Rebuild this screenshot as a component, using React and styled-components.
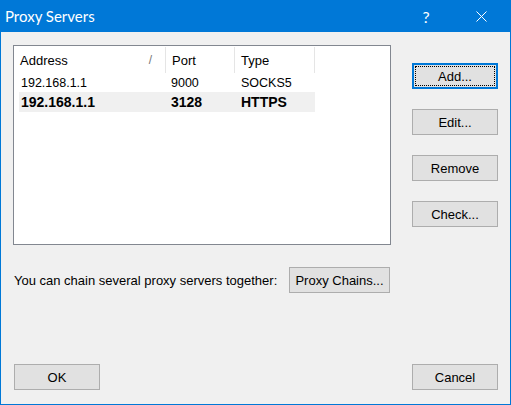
import React from 'react'
import styled, { createGlobalStyle } from 'styled-components'

const GlobalStyle = createGlobalStyle`
  html, body {
    margin: 0;
    padding: 0;
    background: #f0f0f0;
  }
`

const Window = styled.div`
  width: 511px;
  height: 405px;
  box-sizing: border-box;
  border: 1px solid #0078d7;
  border-top: none;
  background: #f0f0f0;
  display: flex;
  flex-direction: column;
  font-family: 'Liberation Sans', Arial, sans-serif;
  font-size: 13px;
  color: #000;
`

const TitleBar = styled.div`
  height: 32px;
  margin: 0 -1px;
  background: #0078d7;
  color: #fff;
  display: flex;
  align-items: center;
  font-family: Lato, 'Noto Sans', sans-serif;
  font-size: 15px;
  padding-left: 5px;
`

const Title = styled.div`
  flex: 1;
  margin-top: -1px;
`

const TitleButton = styled.div`
  width: 46px;
  height: 32px;
  display: flex;
  align-items: center;
  justify-content: center;
  font-size: 16px;
  margin-right: ${p => p.$mr || 0}px;
`

const Content = styled.div`
  flex: 1;
  display: flex;
  flex-direction: column;
  padding: 13px 12px 14px 12px;
`

const TopRow = styled.div`
  display: flex;
`

const ListBox = styled.div`
  width: 378px;
  height: 200px;
  box-sizing: border-box;
  border: 1px solid #828790;
  background: #fff;
  padding-left: 5px;
`

const Header = styled.div`
  display: flex;
  height: 28px;
  align-items: center;
`

const HeaderCell = styled.div`
  width: ${p => p.$w}px;
  box-sizing: border-box;
  height: 26px;
  padding-left: ${p => p.$pl || 6}px;
  display: flex;
  align-items: center;
  border-right: 1px solid #e5e5e5;
  position: relative;
`

const SortMark = styled.span`
  position: absolute;
  right: 13px;
  top: 6px;
  color: #777;
  font-size: 12px;
`

const Row = styled.div`
  display: flex;
  height: ${p => (p.$bold ? 20 : 18)}px;
  align-items: center;
  background: ${p => (p.$selected ? '#f0f0f0' : 'transparent')};
  width: 296px;
  font-weight: ${p => (p.$bold ? 700 : 400)};
  font-size: ${p => (p.$bold ? 14 : 12.5)}px;
`

const Cell = styled.div`
  width: ${p => p.$w}px;
  box-sizing: border-box;
  padding-left: ${p => p.$pl || 6}px;
  white-space: nowrap;
`

const SideButtons = styled.div`
  display: flex;
  flex-direction: column;
  gap: 20px;
  margin-left: 21px;
  padding-top: 18px;
`

const Button = styled.button`
  width: ${p => p.$w || 86}px;
  height: 26px;
  box-sizing: border-box;
  background: #e1e1e1;
  border: ${p => (p.$focus ? '2px solid #0078d7' : '1px solid #adadad')};
  font-family: 'Liberation Sans', Arial, sans-serif;
  font-size: 13px;
  color: #000;
  padding: 0;
  position: relative;
  &::after {
    content: '';
    display: ${p => (p.$focus ? 'block' : 'none')};
    position: absolute;
    inset: 1px;
    border: 1px dotted #000;
  }
`

const ChainRow = styled.div`
  display: flex;
  align-items: center;
  margin-top: 22px;
  padding-left: 1px;
`

const ChainLabel = styled.span`
  width: 275px;
`

const Spacer = styled.div`
  flex: 1;
`

const BottomRow = styled.div`
  display: flex;
  justify-content: space-between;
  padding-left: 1px;
`

const CloseIcon = () => (
  <svg width="11" height="11" viewBox="0 0 11 11">
    <path d="M0.5 0.5 L10.5 10.5 M10.5 0.5 L0.5 10.5" stroke="#fff" strokeWidth="1" />
  </svg>
)

const proxies = [
  { address: '192.168.1.1', port: '9000', type: 'SOCKS5' },
  { address: '192.168.1.1', port: '3128', type: 'HTTPS', bold: true, selected: true },
]

export default function App() {
  return (
    <>
      <GlobalStyle />
      <Window>
        <TitleBar>
          <Title>Proxy Servers</Title>
          <TitleButton $mr={9}>?</TitleButton>
          <TitleButton $mr={7}>
            <CloseIcon />
          </TitleButton>
        </TitleBar>
        <Content>
          <TopRow>
            <ListBox>
              <Header>
                <HeaderCell $w={147} $pl={1}>
                  Address
                  <SortMark>/</SortMark>
                </HeaderCell>
                <HeaderCell $w={69}>Port</HeaderCell>
                <HeaderCell $w={80}>Type</HeaderCell>
              </Header>
              {proxies.map((p, i) => (
                <Row key={i} $bold={p.bold} $selected={p.selected}>
                  <Cell $w={146} $pl={2}>{p.address}</Cell>
                  <Cell $w={70}>{p.port}</Cell>
                  <Cell $w={80}>{p.type}</Cell>
                </Row>
              ))}
            </ListBox>
            <SideButtons>
              <Button $focus>Add...</Button>
              <Button>Edit...</Button>
              <Button>Remove</Button>
              <Button>Check...</Button>
            </SideButtons>
          </TopRow>
          <ChainRow>
            <ChainLabel>You can chain several proxy servers together:</ChainLabel>
            <Button $w={101}>Proxy Chains...</Button>
          </ChainRow>
          <Spacer />
          <BottomRow>
            <Button>OK</Button>
            <Button>Cancel</Button>
          </BottomRow>
        </Content>
      </Window>
    </>
  )
}
